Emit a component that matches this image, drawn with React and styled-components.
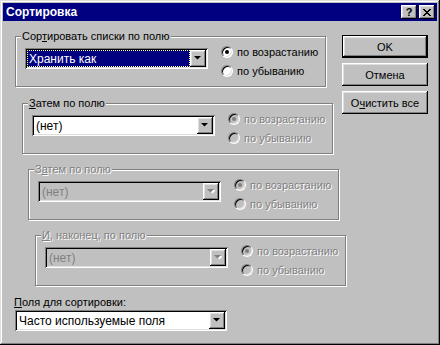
import React from "react"
import styled, { createGlobalStyle } from "styled-components"

const GlobalStyle = createGlobalStyle`
  html, body {
    margin: 0;
    padding: 0;
    background: #c0c0c0;
  }
  body {
    font-family: "Liberation Sans", Arial, sans-serif;
    font-size: 11px;
    color: #000;
  }
`

const raised = `
  box-shadow: inset -1px -1px #000, inset 1px 1px #fff, inset -2px -2px #808080, inset 2px 2px #dfdfdf;
`

const Window = styled.div`
  width: 440px;
  height: 345px;
  box-sizing: border-box;
  padding: 3px;
  background: #c0c0c0;
  box-shadow: inset -1px -1px #000, inset 1px 1px #dfdfdf, inset -2px -2px #808080, inset 2px 2px #fff;
  display: flex;
  flex-direction: column;
`

const TitleBar = styled.div`
  height: 18px;
  background: #000080;
  display: flex;
  align-items: center;
  gap: 2px;
  padding: 0 2px 0 3px;
`

const Title = styled.div`
  flex: 1;
  color: #fff;
  font-weight: bold;
  font-size: 12px;
  line-height: 18px;
`

const TitleButton = styled.div`
  width: 16px;
  height: 14px;
  background: #c0c0c0;
  ${raised}
  display: flex;
  align-items: center;
  justify-content: center;
  font-weight: bold;
  font-size: 11px;
  line-height: 14px;
`

const Body = styled.div`
  display: flex;
  padding: 9px 0 0 12px;
`

const LeftColumn = styled.div`
  width: 327px;
  flex-shrink: 0;
  display: flex;
  flex-direction: column;
`

const ButtonColumn = styled.div`
  display: flex;
  flex-direction: column;
  gap: 5px;
  margin-top: 5px;
`

const Button = styled.div`
  width: 86px;
  height: 23px;
  box-sizing: border-box;
  display: flex;
  align-items: center;
  justify-content: center;
  background: #c0c0c0;
  ${({ $default }) =>
    $default
      ? `border: 1px solid #000;
         box-shadow: inset -1px -1px #000, inset 1px 1px #fff, inset -2px -2px #808080, inset 2px 2px #dfdfdf;`
      : raised}
`

const Group = styled.fieldset`
  margin: ${({ $top }) => $top}px 0 0 ${({ $indent }) => $indent}px;
  width: 311px;
  box-sizing: border-box;
  padding: 3px 8px 9px 9px;
  border: 1px solid #808080;
  box-shadow: inset 1px 1px #fff, 1px 1px #fff;
  min-width: 0;
`

const Legend = styled.legend`
  padding: 0 1px;
  margin-left: -4px;
  line-height: 13px;
  background: #c0c0c0;
  ${({ $disabled }) => $disabled && `color: #808080; text-shadow: 1px 1px #fff;`}
`

const U = styled.span`
  text-decoration: underline;
`

const Row = styled.div`
  display: flex;
  align-items: flex-start;
  gap: 13px;
`

const Combo = styled.div`
  width: ${({ $w }) => $w}px;
  height: 21px;
  margin-top: ${({ $mt }) => $mt || 0}px;
  box-sizing: border-box;
  padding: 2px;
  display: flex;
  background: ${({ $disabled }) => ($disabled ? "#c0c0c0" : "#fff")};
  box-shadow: inset 1px 1px #808080, inset -1px -1px #fff, inset 2px 2px #000, inset -2px -2px #dfdfdf;
  flex-shrink: 0;
`

const ComboText = styled.div`
  flex: 1;
  display: flex;
  align-items: center;
  box-sizing: border-box;
  padding-left: 2px;
  font-size: 12px;
  color: ${({ $disabled }) => ($disabled ? "#808080" : "#000")};
  ${({ $selected }) =>
    $selected &&
    `background: #000080; color: #fff; border: 1px dotted #ffff90; padding-left: 1px;`}
`

const DropButton = styled.div`
  width: 16px;
  height: 17px;
  background: #c0c0c0;
  ${raised}
  display: flex;
  align-items: center;
  justify-content: center;
`

const RadioColumn = styled.div`
  display: flex;
  flex-direction: column;
  gap: 7px;
`

const RadioItem = styled.div`
  display: flex;
  align-items: center;
  gap: 4px;
  height: 12px;
  white-space: nowrap;
  ${({ $disabled }) => $disabled && `color: #808080; text-shadow: 1px 1px #fff;`}
`

const RadioCircle = styled.span`
  width: 12px;
  height: 12px;
  box-sizing: border-box;
  border-radius: 50%;
  border: 1px solid;
  border-color: #808080 #fff #fff #808080;
  box-shadow: inset 1px 1px #000, inset -1px -1px #dfdfdf;
  background: ${({ $disabled }) => ($disabled ? "#c0c0c0" : "#fff")};
  display: flex;
  align-items: center;
  justify-content: center;
  flex-shrink: 0;

  &::after {
    content: "";
    display: ${({ $checked }) => ($checked ? "block" : "none")};
    width: 4px;
    height: 4px;
    border-radius: 50%;
    background: ${({ $disabled }) => ($disabled ? "#808080" : "#000")};
  }
`

const FieldLabel = styled.div`
  margin: 10px 0 1px -1px;
  line-height: 13px;
`

const Arrow = ({ disabled }) => (
  <svg width="8" height="5" viewBox="0 0 8 5">
    {disabled && <path d="M2 1h7L5.5 4.5z" fill="#fff" />}
    <path d="M0 0h7L3.5 3.5z" fill={disabled ? "#808080" : "#000"} />
  </svg>
)

const CloseIcon = () => (
  <svg width="8" height="7" viewBox="0 0 8 7" shapeRendering="crispEdges">
    <path
      d="M0 0h2v1h1v1h2V1h1V0h2v1H7v1H6v1H5v1h1v1h1v1h1v1H6V6H5V5H3v1H2v1H0V6h1V5h1V4h1V3H2V2H1V1H0z"
      fill="#000"
    />
  </svg>
)

const ComboBox = ({ width, text, disabled, selected, mt }) => (
  <Combo $w={width} $disabled={disabled} $mt={mt}>
    <ComboText $disabled={disabled} $selected={selected}>
      {text}
    </ComboText>
    <DropButton>
      <Arrow disabled={disabled} />
    </DropButton>
  </Combo>
)

const Radios = ({ disabled, checkedFirst }) => (
  <RadioColumn>
    <RadioItem $disabled={disabled}>
      <RadioCircle $disabled={disabled} $checked={checkedFirst} />
      по возрастанию
    </RadioItem>
    <RadioItem $disabled={disabled}>
      <RadioCircle $disabled={disabled} />
      по убыванию
    </RadioItem>
  </RadioColumn>
)

const groups = [
  {
    top: 0,
    indent: 0,
    label: (
      <>
        Сор<U>т</U>ировать списки по полю
      </>
    ),
    text: "Хранить как",
    selected: true,
  },
  {
    top: 10,
    indent: 7,
    label: (
      <>
        <U>З</U>атем по полю
      </>
    ),
    text: "(нет)",
    radiosDisabled: true,
  },
  {
    top: 9,
    indent: 13,
    label: (
      <>
        З<U>а</U>тем по полю
      </>
    ),
    text: "(нет)",
    disabled: true,
    radiosDisabled: true,
  },
  {
    top: 9,
    indent: 20,
    label: (
      <>
        <U>И</U>, наконец, по полю
      </>
    ),
    text: "(нет)",
    disabled: true,
    radiosDisabled: true,
  },
]

const App = () => {
  return (
    <>
      <GlobalStyle />
      <Window>
        <TitleBar>
          <Title>Сортировка</Title>
          <TitleButton>?</TitleButton>
          <TitleButton>
            <CloseIcon />
          </TitleButton>
        </TitleBar>
        <Body>
          <LeftColumn>
            {groups.map((g, i) => (
              <Group key={i} $top={g.top} $indent={g.indent}>
                <Legend $disabled={g.disabled}>{g.label}</Legend>
                <Row>
                  <ComboBox
                    width={183}
                    mt={2}
                    text={g.text}
                    disabled={g.disabled}
                    selected={g.selected}
                  />
                  <Radios disabled={g.radiosDisabled} checkedFirst />
                </Row>
              </Group>
            ))}
            <FieldLabel>
              <U>П</U>оля для сортировки:
            </FieldLabel>
            <ComboBox width={212} text="Часто используемые поля" />
          </LeftColumn>
          <ButtonColumn>
            <Button $default>OK</Button>
            <Button>Отмена</Button>
            <Button>
              О<U>ч</U>истить все
            </Button>
          </ButtonColumn>
        </Body>
      </Window>
    </>
  )
}

export default App
